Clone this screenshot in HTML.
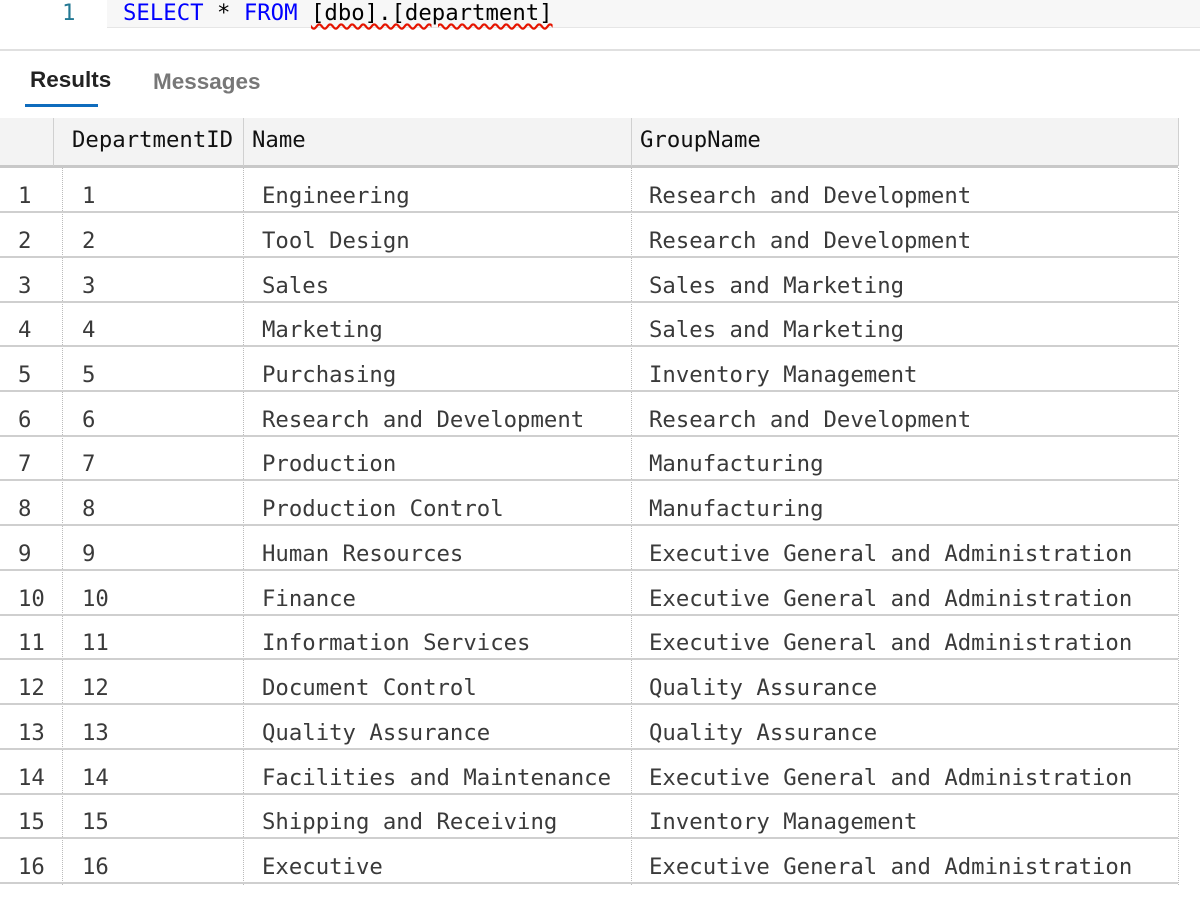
<!DOCTYPE html>
<html><head><style>
body{margin:0;width:1200px;height:906px;background:#fff;position:relative;overflow:hidden;font-family:"DejaVu Sans Mono","Liberation Mono",monospace;}
.a{position:absolute;white-space:pre;}
.code{top:0;left:107px;width:1093px;height:27px;background:#f7f7f7;border-bottom:1px solid #e6e6e6;}
.hdr{top:118px;left:0;width:1178px;height:47px;background:#f3f3f3;border-bottom:3px solid #c8c8c8;}
.row{left:0;width:1178px;height:43px;border-bottom:2px solid #cfcfcf;font-size:22.3px;color:#3a3a3a;}
.row span{position:absolute;top:15px;}
.vl{position:absolute;top:168px;height:717px;border-left:1px dotted #bbb;}
</style></head><body>
<div class="a code"></div>
<div class="a" style="left:62px;top:0;font-size:22.3px;color:#237893;">1</div>
<div class="a" style="left:123px;top:0;font-size:22.3px;color:#000;"><span style="color:#0000ff">SELECT</span> * <span style="color:#0000ff">FROM</span> <span style="text-decoration:underline wavy #e51400;text-underline-offset:3px;">[dbo].[department]</span></div>
<div class="a" style="left:0;top:49px;width:1200px;height:2px;background:#e0e0e0;"></div>
<div class="a" style="left:30px;top:67px;font-family:'Liberation Sans',sans-serif;font-weight:bold;font-size:22.5px;color:#222;">Results</div>
<div class="a" style="left:153px;top:69px;font-family:'Liberation Sans',sans-serif;font-weight:bold;font-size:22.5px;color:#777;">Messages</div>
<div class="a" style="left:25px;top:104px;width:73px;height:3px;background:#0f6cbd;"></div>
<div class="a hdr"></div>
<div class="a" style="left:53px;top:118px;height:48px;border-left:1px solid #d0d0d0;"></div>
<div class="a" style="left:243px;top:118px;height:48px;border-left:1px solid #d0d0d0;"></div>
<div class="a" style="left:631px;top:118px;height:48px;border-left:1px solid #d0d0d0;"></div>
<div class="a" style="left:1178px;top:118px;height:48px;border-left:1px solid #d0d0d0;"></div>
<div class="a" style="left:72px;top:127px;font-size:22.3px;color:#111;">DepartmentID</div>
<div class="a" style="left:252px;top:127px;font-size:22.3px;color:#111;">Name</div>
<div class="a" style="left:640px;top:127px;font-size:22.3px;color:#111;">GroupName</div>
<div class="vl" style="left:62px"></div>
<div class="vl" style="left:243px"></div>
<div class="vl" style="left:631px"></div>
<div class="vl" style="left:1178px"></div>
<div class="a row" style="top:168.0px"><span style="left:18px">1</span><span style="left:82px">1</span><span style="left:262px">Engineering</span><span style="left:649px">Research and Development</span></div>
<div class="a row" style="top:212.7px"><span style="left:18px">2</span><span style="left:82px">2</span><span style="left:262px">Tool Design</span><span style="left:649px">Research and Development</span></div>
<div class="a row" style="top:257.5px"><span style="left:18px">3</span><span style="left:82px">3</span><span style="left:262px">Sales</span><span style="left:649px">Sales and Marketing</span></div>
<div class="a row" style="top:302.2px"><span style="left:18px">4</span><span style="left:82px">4</span><span style="left:262px">Marketing</span><span style="left:649px">Sales and Marketing</span></div>
<div class="a row" style="top:346.9px"><span style="left:18px">5</span><span style="left:82px">5</span><span style="left:262px">Purchasing</span><span style="left:649px">Inventory Management</span></div>
<div class="a row" style="top:391.7px"><span style="left:18px">6</span><span style="left:82px">6</span><span style="left:262px">Research and Development</span><span style="left:649px">Research and Development</span></div>
<div class="a row" style="top:436.4px"><span style="left:18px">7</span><span style="left:82px">7</span><span style="left:262px">Production</span><span style="left:649px">Manufacturing</span></div>
<div class="a row" style="top:481.1px"><span style="left:18px">8</span><span style="left:82px">8</span><span style="left:262px">Production Control</span><span style="left:649px">Manufacturing</span></div>
<div class="a row" style="top:525.8px"><span style="left:18px">9</span><span style="left:82px">9</span><span style="left:262px">Human Resources</span><span style="left:649px">Executive General and Administration</span></div>
<div class="a row" style="top:570.6px"><span style="left:18px">10</span><span style="left:82px">10</span><span style="left:262px">Finance</span><span style="left:649px">Executive General and Administration</span></div>
<div class="a row" style="top:615.3px"><span style="left:18px">11</span><span style="left:82px">11</span><span style="left:262px">Information Services</span><span style="left:649px">Executive General and Administration</span></div>
<div class="a row" style="top:660.0px"><span style="left:18px">12</span><span style="left:82px">12</span><span style="left:262px">Document Control</span><span style="left:649px">Quality Assurance</span></div>
<div class="a row" style="top:704.8px"><span style="left:18px">13</span><span style="left:82px">13</span><span style="left:262px">Quality Assurance</span><span style="left:649px">Quality Assurance</span></div>
<div class="a row" style="top:749.5px"><span style="left:18px">14</span><span style="left:82px">14</span><span style="left:262px">Facilities and Maintenance</span><span style="left:649px">Executive General and Administration</span></div>
<div class="a row" style="top:794.2px"><span style="left:18px">15</span><span style="left:82px">15</span><span style="left:262px">Shipping and Receiving</span><span style="left:649px">Inventory Management</span></div>
<div class="a row" style="top:839.0px"><span style="left:18px">16</span><span style="left:82px">16</span><span style="left:262px">Executive</span><span style="left:649px">Executive General and Administration</span></div>
</body></html>
